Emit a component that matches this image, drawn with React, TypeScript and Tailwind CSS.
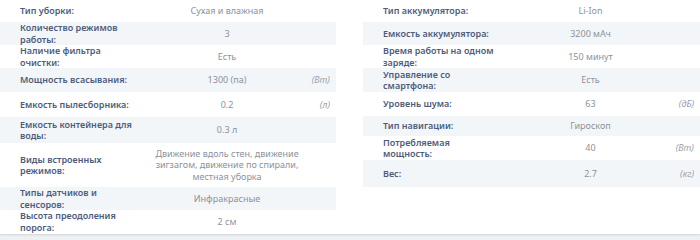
type Spec = {
  label: string;
  value: string;
  unit?: string;
  h: string;
};

const left: Spec[] = [
  { label: "Тип уборки:", value: "Сухая и влажная", h: "min-h-[22px]" },
  { label: "Количество режимов работы:", value: "3", h: "min-h-[23px]" },
  { label: "Наличие фильтра очистки:", value: "Есть", h: "min-h-[23px]" },
  { label: "Мощность всасывания:", value: "1300 (па)", unit: "(Вт)", h: "min-h-[24px]" },
  { label: "Емкость пылесборника:", value: "0.2", unit: "(л)", h: "min-h-[25px]" },
  { label: "Емкость контейнера для воды:", value: "0.3 л", h: "min-h-[26px]" },
  {
    label: "Виды встроенных режимов:",
    value: "Движение вдоль стен, движение зигзагом, движение по спирали, местная уборка",
    h: "min-h-[44px]",
  },
  { label: "Типы датчиков и сенсоров:", value: "Инфракрасные", h: "min-h-[23px]" },
  { label: "Высота преодоления порога:", value: "2 см", h: "min-h-[23px]" },
];

const right: Spec[] = [
  { label: "Тип аккумулятора:", value: "Li-Ion", h: "min-h-[22px]" },
  { label: "Емкость аккумулятора:", value: "3200 мАч", h: "min-h-[23px]" },
  { label: "Время работы на одном заряде:", value: "150 минут", h: "min-h-[23px]" },
  { label: "Управление со смартфона:", value: "Есть", h: "min-h-[24px]" },
  { label: "Уровень шума:", value: "63", unit: "(дБ)", h: "min-h-[24px]" },
  { label: "Тип навигации:", value: "Гироскоп", h: "min-h-[20px]" },
  { label: "Потребляемая мощность:", value: "40", unit: "(Вт)", h: "min-h-[24px]" },
  { label: "Вес:", value: "2.7", unit: "(кг)", h: "min-h-[27px]" },
];

const SpecRow = ({ item, striped }: { item: Spec; striped: boolean }) => (
  <div
    className={`flex items-center ${item.h} ${striped ? "bg-[#f3f6f9]" : "bg-white"}`}
  >
    <div className="w-[144px] shrink-0 pl-5 pr-[12px] text-[9px] font-semibold leading-[11.5px] text-[#4d5c7b]">
      {item.label}
    </div>
    <div className="flex-1 px-2 py-1 text-center text-[9px] leading-[11.5px] text-[#8d929a]">
      {item.value}
    </div>
    <div className="w-[26px] shrink-0 pr-[6px] text-right text-[9px] italic leading-[11.5px] text-[#9aa0a8]">
      {item.unit}
    </div>
  </div>
);

export default function App() {
  return (
    <div
      className="h-[240px] w-[700px] overflow-hidden bg-[#eef1f4]"
      style={{ fontFamily: '"Noto Sans", "Open Sans", sans-serif' }}
    >
      <div className="flex h-[234px] gap-[27px] bg-white shadow-[0_1px_2px_rgba(0,0,0,0.12)]">
        <div className="flex w-[336px] flex-col">
          {left.map((item, i) => (
            <SpecRow key={i} item={item} striped={i % 2 === 1} />
          ))}
        </div>
        <div className="flex w-[337px] flex-col">
          {right.map((item, i) => (
            <SpecRow key={i} item={item} striped={i % 2 === 1} />
          ))}
        </div>
      </div>
    </div>
  );
}
